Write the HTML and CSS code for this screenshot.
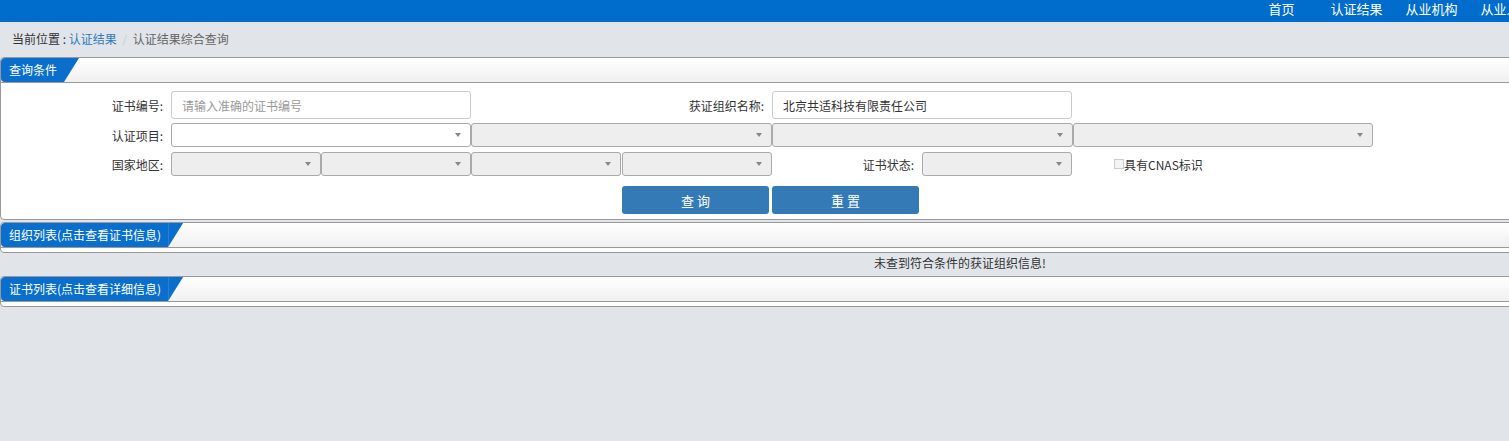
FILE: index.html
```html
<!DOCTYPE html>
<html lang="zh-CN">
<head>
    <meta charset="UTF-8">
    <title>认证结果综合查询</title>
    <link rel="stylesheet" href="styles.css">
</head>
<body>
<div class="page">
    <div class="topbar">
        <ul class="nav">
            <li>首页</li>
            <li>认证结果</li>
            <li>从业机构</li>
            <li>从业人员</li>
        </ul>
    </div>
    <div class="crumb">
        当前位置 : <a href="#">认证结果</a> <span class="sep">/</span> <span class="cur">认证结果综合查询</span>
    </div>

    <div class="panel">
        <div class="panel-head"><span class="tab">查询条件</span></div>
        <div class="panel-body form">
            <div class="row first">
                <label class="lbl">证书编号:</label>
                <input class="txt" type="text" placeholder="请输入准确的证书编号">
                <label class="lbl wide">获证组织名称:</label>
                <input class="txt" type="text" value="北京共适科技有限责任公司">
            </div>
            <div class="row">
                <label class="lbl">认证项目:</label>
                <div class="sel on"></div>
                <div class="sel mid-sel"></div>
                <div class="sel mid-sel"></div>
                <div class="sel"></div>
            </div>
            <div class="row">
                <label class="lbl">国家地区:</label>
                <div class="sel half"></div>
                <div class="sel half"></div>
                <div class="sel half"></div>
                <div class="sel half gap"></div>
                <label class="lbl mid">证书状态:</label>
                <div class="sel half"></div>
                <label class="chk"><span class="box"></span>具有CNAS标识</label>
            </div>
            <div class="btns">
                <button class="btn">查 询</button>
                <button class="btn">重 置</button>
            </div>
        </div>
    </div>

    <div class="panel">
        <div class="panel-head"><span class="tab">组织列表(点击查看证书信息)</span></div>
        <div class="panel-body empty"></div>
    </div>
    <div class="msg">未查到符合条件的获证组织信息!</div>

    <div class="panel">
        <div class="panel-head"><span class="tab">证书列表(点击查看详细信息)</span></div>
        <div class="panel-body empty"></div>
    </div>
</div>
</body>
</html>
```

FILE: styles.css
```css
html, body {
    margin: 0;
    overflow: hidden;
    background: #e1e5ea;
}
body {
    font-family: "Noto Sans CJK SC", "Microsoft YaHei", sans-serif;
    font-size: 12px;
    color: #333;
}
.page {
    width: 1920px;
}
.topbar {
    height: 22px;
    background: #006dcc;
}
.nav {
    list-style: none;
    margin: 0;
    padding: 0 0 0 1244px;
    display: flex;
}
.nav li {
    width: 75px;
    text-align: center;
    color: #fff;
    font-size: 13px;
    line-height: 18px;
    white-space: nowrap;
}
.crumb {
    height: 35px;
    line-height: 33px;
    padding-left: 12px;
    color: #333;
}
.crumb a {
    color: #337ab7;
    text-decoration: none;
}
.crumb .sep {
    color: #ccc;
    margin: 0 3px;
}
.crumb .cur {
    color: #666;
}
.panel {
    background: #fff;
    border: 1px solid #999;
    border-radius: 4px;
    margin-bottom: 2px;
}
.panel-head {
    height: 24px;
    border-bottom: 1px solid #999;
    background: linear-gradient(#fff, #f0f0f0);
    border-radius: 4px 4px 0 0;
}
.tab {
    position: relative;
    display: inline-block;
    height: 24px;
    line-height: 24px;
    padding: 0 7px 0 8px;
    background: #0a6fcc;
    color: #fff;
    font-size: 12px;
    border-radius: 4px 0 0 4px;
}
.tab::after {
    content: "";
    position: absolute;
    top: 0;
    right: -15px;
    width: 15px;
    height: 24px;
    background: #0a6fcc;
    clip-path: polygon(0 0, 100% 0, 0 100%);
}
.form {
    padding: 8px 0 5px;
}
.row {
    display: flex;
    align-items: center;
    margin-bottom: 5px;
}
.row.first {
    margin-bottom: 4px;
}
.lbl {
    width: 162px;
    padding-right: 8px;
    text-align: right;
    white-space: nowrap;
}
.lbl.wide {
    width: 293px;
}
.lbl.mid {
    width: 142px;
}
.txt {
    box-sizing: border-box;
    width: 300px;
    height: 28px;
    border: 1px solid #ccc;
    border-radius: 3px;
    padding: 0 10px;
    font: inherit;
    color: #333;
}
.txt::placeholder {
    color: #999;
}
.sel {
    position: relative;
    box-sizing: border-box;
    width: 300px;
    height: 24px;
    border: 1px solid #aaa;
    border-radius: 3px;
    background: #eee;
}
.sel.on {
    background: #fff;
}
.sel.mid-sel {
    width: 301px;
}
.sel.half {
    width: 150px;
}
.sel.gap {
    margin-left: 1px;
}
.sel::after {
    content: "";
    position: absolute;
    right: 9px;
    top: 9px;
    border-left: 3px solid transparent;
    border-right: 3px solid transparent;
    border-top: 4px solid #888;
}
.chk {
    display: flex;
    align-items: center;
    margin-left: 42px;
    white-space: nowrap;
}
.chk .box {
    box-sizing: border-box;
    width: 10px;
    height: 10px;
    border: 1px solid #ccc;
    background: #f4f4f4;
}
.btns {
    display: flex;
    gap: 3px;
    padding: 5px 0 0 621px;
}
.btn {
    width: 147px;
    height: 28px;
    border: none;
    border-radius: 3px;
    background: #337ab7;
    color: #fff;
    font: inherit;
    font-size: 13px;
}
.empty {
    height: 4px;
}
.msg {
    height: 21px;
    line-height: 16px;
    text-align: center;
    color: #333;
}
```
